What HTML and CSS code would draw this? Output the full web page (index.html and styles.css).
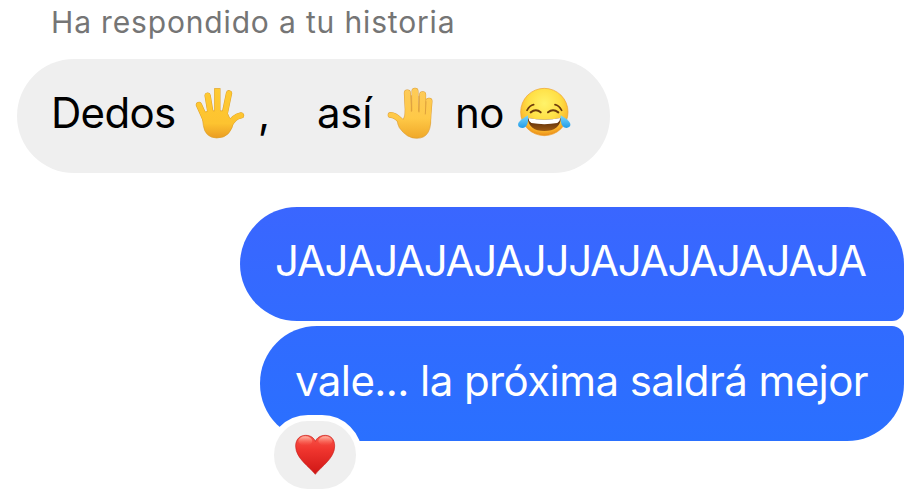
FILE: index.html
```html
<!DOCTYPE html>
<html lang="es">
<head>
    <meta charset="UTF-8">
    <meta name="viewport" content="width=device-width, initial-scale=1.0">
    <title>Chat</title>
    <link rel="stylesheet" href="styles.css">
</head>
<body>
    <div class="chat">
        <div class="reply-label">Ha respondido a tu historia</div>

        <!-- Received message -->
        <div class="bubble received">
            <span class="word word-dedos">Dedos</span>
            <svg class="hand-open" viewBox="45 36 150 156">
                <defs>
                    <linearGradient id="skin" gradientUnits="userSpaceOnUse" x1="0" y1="36" x2="0" y2="192">
                        <stop offset="0" stop-color="#ffcb32"/>
                        <stop offset="0.7" stop-color="#fdc330"/>
                        <stop offset="1" stop-color="#e99a22"/>
                    </linearGradient>
                </defs>
                <g fill="none" stroke="#dda02b" stroke-linecap="round" stroke-width="19">
                    <path d="M57 90L76 132M83 62L93 122M147 55L133 122M183 121C165 124 158 135 145 153"/>
                    <path d="M112 49V122" stroke-linecap="square"/>
                </g>
                <path d="M65 114Q90 104 112 108Q135 104 144 118Q150 136 162 134Q155 189 110 189Q75 188 70 151Z" fill="url(#skin)" stroke="#dda02b" stroke-width="2"/>
                <g fill="none" stroke="url(#skin)" stroke-linecap="round" stroke-width="16">
                    <path d="M57 90L76 132M83 62L93 124M147 55L133 124M183 121C165 124 158 135 145 153"/>
                    <path d="M112.1 49L112 122" stroke-linecap="square"/>
                </g>
            </svg>
            <span class="word word-comma">,</span>
            <span class="word word-asi">así</span>
            <svg class="hand-back" viewBox="51 36 141 156">
                <defs>
                    <linearGradient id="skinBack" gradientUnits="userSpaceOnUse" x1="0" y1="36" x2="0" y2="192">
                        <stop offset="0" stop-color="#fdcb5a"/>
                        <stop offset="0.6" stop-color="#ffc947"/>
                        <stop offset="1" stop-color="#efa728"/>
                    </linearGradient>
                </defs>
                <g fill="none" stroke="#dc9e38" stroke-linecap="round" stroke-width="21">
                    <path d="M112 54L116 130M135 49L136 130M158 59L156 130M177 79L172 140"/>
                    <path d="M62 120C82 120 88 138 104 148" stroke-width="18"/>
                </g>
                <path d="M106 105L181 112Q190 190 140 190Q110 190 88 158Q82 147 82 136Q104 148 106 105Z" fill="url(#skinBack)" stroke="#dc9e38" stroke-width="2"/>
                <g fill="none" stroke="url(#skinBack)" stroke-linecap="round" stroke-width="18">
                    <path d="M112 54L116 130M135 49L136 130M158 59L156 130M177 79L172 140"/>
                    <path d="M62 120C82 120 88 138 104 148" stroke-width="15"/>
                </g>
                <path d="M124 62V109M147 64V111M168 80L166 117" fill="none" stroke="#dfa13c" stroke-width="3" stroke-linecap="round"/>
            </svg>
            <span class="word word-no">no</span>
            <svg class="face" viewBox="36 36 162 153">
                <defs>
                    <radialGradient id="faceFill" cx="0.5" cy="0.32" r="0.68">
                        <stop offset="0" stop-color="#fff36a"/>
                        <stop offset="0.5" stop-color="#ffdf45"/>
                        <stop offset="0.85" stop-color="#fbb52b"/>
                        <stop offset="1" stop-color="#e98b18"/>
                    </radialGradient>
                    <linearGradient id="mouthFill" x1="0" y1="0" x2="0" y2="1">
                        <stop offset="0" stop-color="#4c2308"/>
                        <stop offset="1" stop-color="#9d5a12"/>
                    </linearGradient>
                    <linearGradient id="tear" x1="0" y1="0" x2="0" y2="1">
                        <stop offset="0" stop-color="#7bd6fa"/>
                        <stop offset="1" stop-color="#229ce9"/>
                    </linearGradient>
                </defs>
                <circle cx="118" cy="111" r="71" fill="url(#faceFill)" stroke="#ee9f28" stroke-width="2"/>
                <path d="M68 129Q118 139 168 129Q164 168 118 168Q72 168 68 129Z" fill="url(#mouthFill)"/>
                <path d="M70 129Q118 139 166 129Q165 140 157 144Q118 151 79 144Q71 140 70 129Z" fill="#fff"/>
                <g fill="none" stroke="#6b3a0c" stroke-linecap="round" stroke-width="6">
                    <path d="M66 106Q74 91 86 89M150 89Q162 91 170 106" stroke-width="5"/>
                    <path d="M77 112Q93 100 107 112M129 112Q144 100 160 112"/>
                </g>
                <path d="M69 121Q72 158 52 159Q36 157 40 144Q46 134 69 121Z" fill="url(#tear)"/>
                <path d="M167 121Q164 158 184 159Q200 157 195 144Q190 134 167 121Z" fill="url(#tear)"/>
            </svg>
        </div>

        <!-- Sent messages -->
        <div class="sent-group">
            <div class="bubble sent sent-first"><span class="laugh">JAJAJAJAJAJJJAJAJAJAJAJA</span></div>
            <div class="bubble sent sent-last">
                <span class="vale">vale... la próxima saldrá mejor</span>
                <div class="reaction">
                    <svg class="heart" viewBox="132 102 126 126">
                        <defs>
                            <linearGradient id="heartFill" x1="0" y1="0" x2="0" y2="1">
                                <stop offset="0" stop-color="#f8574b"/>
                                <stop offset="0.35" stop-color="#f0362f"/>
                                <stop offset="1" stop-color="#cf1615"/>
                            </linearGradient>
                            <linearGradient id="shine" x1="0" y1="0" x2="0" y2="1">
                                <stop offset="0" stop-color="#ffc0b0" stop-opacity="0.9"/>
                                <stop offset="1" stop-color="#ff6a58" stop-opacity="0"/>
                            </linearGradient>
                        </defs>
                        <path d="M196 223C177 199 137 175 137 138C137 118 150 106 167 106C182 106 192 114 196 124C200 114 211 106 226 106C243 106 254 119 254 138C254 175 214 199 196 223Z" fill="url(#heartFill)" stroke="#c9201c" stroke-width="2"/>
                        <ellipse cx="166" cy="123" rx="21" ry="14" fill="url(#shine)"/>
                        <ellipse cx="226" cy="123" rx="21" ry="14" fill="url(#shine)"/>
                    </svg>
                </div>
            </div>
        </div>
    </div>
</body>
</html>
```
FILE: styles.css
```css
body {
    margin: 0;
    background-color: #fff;
    font-family: Inter, "Liberation Sans", sans-serif;
    overflow: hidden;
}

.chat {
    display: flex;
    flex-direction: column;
    align-items: flex-start;
    height: 495px;
    box-sizing: border-box;
    padding: 2px 19px 0 17px;
}

.reply-label {
    height: 57px;
    padding-left: 34px;
    font-size: 30px;
    line-height: 41px;
    letter-spacing: 0.84px;
    color: #757575;
    white-space: nowrap;
}

.bubble {
    box-sizing: border-box;
    height: 114px;
    border-radius: 57px;
    font-size: 42px;
    line-height: 108px;
    white-space: nowrap;
}

.received {
    display: flex;
    width: 593px;
    padding-left: 34px;
    background-color: #efefef;
    color: #000;
}

.received svg {
    flex: none;
    margin-top: 28px;
}

.word {
    flex: none;
    box-sizing: border-box;
}

.word-dedos {
    width: 144px;
    letter-spacing: -0.7px;
}

.word-comma {
    width: 72px;
    padding-left: 13px;
}

.word-asi {
    width: 70px;
    letter-spacing: -0.3px;
}

.word-no {
    width: 83px;
    padding-left: 21px;
    letter-spacing: -0.5px;
}

.hand-open {
    width: 50px;
    height: 52px;
}

.hand-back {
    width: 47px;
    height: 52px;
}

.face {
    width: 54px;
    height: 51px;
}

.sent-group {
    display: flex;
    flex-direction: column;
    align-items: flex-end;
    align-self: flex-end;
    gap: 5px;
    margin-top: 34px;
}

.sent {
    padding-left: 35px;
    color: #fff;
}

.sent-first {
    width: 664px;
    border-bottom-right-radius: 12px;
    background: linear-gradient(#3a66ff, #326bff);
}

.sent-last {
    position: relative;
    width: 644px;
    height: 115px;
    border-top-right-radius: 12px;
    background: linear-gradient(#316bff, #2a70ff);
    line-height: 109px;
}

.laugh {
    letter-spacing: -1.28px;
}

.vale {
    letter-spacing: -0.58px;
}

.reaction {
    position: absolute;
    left: 8px;
    top: 89px;
    display: flex;
    align-items: center;
    justify-content: center;
    width: 82px;
    height: 68px;
    border: 6px solid #fff;
    border-radius: 40px;
    background-color: #efefef;
}

.heart {
    width: 42px;
    height: 42px;
}
```
